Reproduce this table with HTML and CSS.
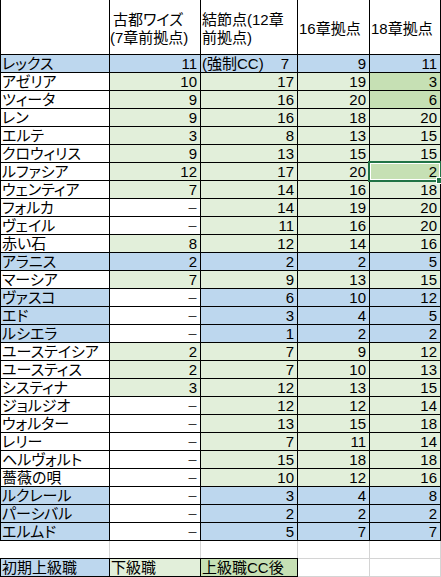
FILE: index.html
```html
<!DOCTYPE html>
<html lang="ja">
<head>
<meta charset="utf-8">
<title>拠点表</title>
<link rel="stylesheet" href="styles.css">
</head>
<body>
<div class="sheet">
  <div class="hd"></div>
  <div class="hd hd2"><div><span class="ind">古都ワイズ</span><br>(7章前拠点)</div></div>
  <div class="hd"><div>結節点(12章<br>前拠点)</div></div>
  <div class="hd"><div>16章拠点</div></div>
  <div class="hd"><div>18章拠点</div></div>

  <div class="nm b">レックス</div><div class="n b">11</div><div class="n b split"><span>(強制CC)</span><span>7</span></div><div class="n b">9</div><div class="n b">11</div>
  <div class="nm">アゼリア</div><div class="n g">10</div><div class="n g">17</div><div class="n g">19</div><div class="n d">3</div>
  <div class="nm">ツィータ</div><div class="n g">9</div><div class="n g">16</div><div class="n g">20</div><div class="n d">6</div>
  <div class="nm">レン</div><div class="n g">9</div><div class="n g">16</div><div class="n g">18</div><div class="n g">20</div>
  <div class="nm">エルテ</div><div class="n g">3</div><div class="n g">8</div><div class="n g">13</div><div class="n g">15</div>
  <div class="nm">クロウィリス</div><div class="n g">9</div><div class="n g">13</div><div class="n g">15</div><div class="n g">15</div>
  <div class="nm">ルファシア</div><div class="n g">12</div><div class="n g">17</div><div class="n g">20</div><div class="n d sel">2</div>
  <div class="nm">ウェンティア</div><div class="n g">7</div><div class="n g">14</div><div class="n g">16</div><div class="n g">18</div>
  <div class="nm">フォルカ</div><div class="n dash">－</div><div class="n g">14</div><div class="n g">19</div><div class="n g">20</div>
  <div class="nm">ヴェイル</div><div class="n dash">－</div><div class="n g">11</div><div class="n g">16</div><div class="n g">20</div>
  <div class="nm">赤い石</div><div class="n g">8</div><div class="n g">12</div><div class="n g">14</div><div class="n g">16</div>
  <div class="nm b">アラニス</div><div class="n b">2</div><div class="n b">2</div><div class="n b">2</div><div class="n b">5</div>
  <div class="nm">マーシア</div><div class="n g">7</div><div class="n g">9</div><div class="n g">13</div><div class="n g">15</div>
  <div class="nm b">ヴァスコ</div><div class="n dash">－</div><div class="n b">6</div><div class="n b">10</div><div class="n b">12</div>
  <div class="nm b">エド</div><div class="n dash">－</div><div class="n b">3</div><div class="n b">4</div><div class="n b">5</div>
  <div class="nm b">ルシエラ</div><div class="n dash">－</div><div class="n b">1</div><div class="n b">2</div><div class="n b">2</div>
  <div class="nm">ユーステイシア</div><div class="n g">2</div><div class="n g">7</div><div class="n g">9</div><div class="n g">12</div>
  <div class="nm">ユースティス</div><div class="n g">2</div><div class="n g">7</div><div class="n g">10</div><div class="n g">13</div>
  <div class="nm">システィナ</div><div class="n g">3</div><div class="n g">12</div><div class="n g">13</div><div class="n g">15</div>
  <div class="nm">ジョルジオ</div><div class="n dash">－</div><div class="n g">12</div><div class="n g">12</div><div class="n g">14</div>
  <div class="nm">ウォルター</div><div class="n dash">－</div><div class="n g">13</div><div class="n g">15</div><div class="n g">18</div>
  <div class="nm">レリー</div><div class="n dash">－</div><div class="n g">7</div><div class="n g">11</div><div class="n g">14</div>
  <div class="nm">ヘルヴォルト</div><div class="n dash">－</div><div class="n g">15</div><div class="n g">18</div><div class="n g">18</div>
  <div class="nm">薔薇の唄</div><div class="n dash">－</div><div class="n g">10</div><div class="n g">12</div><div class="n g">16</div>
  <div class="nm b">ルクレール</div><div class="n dash">－</div><div class="n b">3</div><div class="n b">4</div><div class="n b">8</div>
  <div class="nm b">パーシバル</div><div class="n dash">－</div><div class="n b">2</div><div class="n b">2</div><div class="n b">2</div>
  <div class="nm b">エルムド</div><div class="n dash">－</div><div class="n b">5</div><div class="n b">7</div><div class="n b">7</div>
</div>
<div class="tail">
  <div class="e"></div><div class="e"></div><div class="e"></div><div class="e"></div><div class="e"></div>
  <div class="lg b">初期上級職</div><div class="lg g">下級職</div><div class="lg d">上級職CC後</div><div class="e"></div><div class="e"></div>
</div>
</body>
</html>
```

FILE: styles.css
```css
html, body {
  margin: 0;
  padding: 0;
  background: #fff;
}
body {
  font-family: "Liberation Sans", "Noto Sans CJK JP", sans-serif;
  font-size: 15px;
  font-feature-settings: "palt";
  color: #000;
  width: 441px;
}
.sheet {
  display: grid;
  grid-template-columns: 108px 90px 96px 71px 70px;
  grid-template-rows: 54px;
  grid-auto-rows: 17px;
  gap: 1px;
  padding: 0 1px 1px 1px;
  background: #000;
  width: 439px;
}
.sheet > div {
  background: #fff;
  overflow: visible;
  white-space: nowrap;
  line-height: 17px;
}
.hd {
  display: flex;
  align-items: center;
  padding: 4px 0 0 1px;
  line-height: 18px !important;
}
.hd2 { padding-left: 0; }
.ind { padding-left: 3px; }
.nm {
  padding-left: 1px;
  display: flex;
  align-items: flex-end;
}
.n {
  display: flex;
  justify-content: flex-end;
  align-items: flex-end;
  padding-right: 3px;
}
.sheet > .dash {
  font-size: 11px;
  align-items: center;
  padding-top: 3px;
  padding-right: 2px;
}
.split {
  justify-content: space-between;
  padding-left: 1px;
  padding-right: 8px;
}
.sheet > .b, .tail > .b { background: #bdd7ee; }
.sheet > .g, .tail > .g { background: #e2efda; }
.sheet > .d, .tail > .d { background: #c6e0b4; }
.sel { position: relative; }
.sel::after {
  content: "";
  position: absolute;
  left: -2px;
  top: -2px;
  right: -2px;
  bottom: -2px;
  border: 2px solid #217346;
  box-shadow: inset 0 0 0 1px #fff;
}
.sel::before {
  content: "";
  position: absolute;
  right: -3px;
  bottom: -4px;
  width: 5px;
  height: 5px;
  background: #217346;
  border: 1px solid #fff;
  z-index: 2;
}
.tail {
  display: grid;
  grid-template-columns: 108px 90px 96px 71px 70px;
  grid-auto-rows: 17px;
  gap: 1px;
  background: #d4d4d4;
  border-left: 1px solid #fff;
  padding: 0 1px 1px 0;
  width: 439px;
}
.tail > div {
  background: #fff;
  line-height: 17px;
  white-space: nowrap;
}
.lg {
  box-shadow: 0 0 0 1px #000;
  padding-left: 1px;
  display: flex;
  align-items: flex-end;
}
```
